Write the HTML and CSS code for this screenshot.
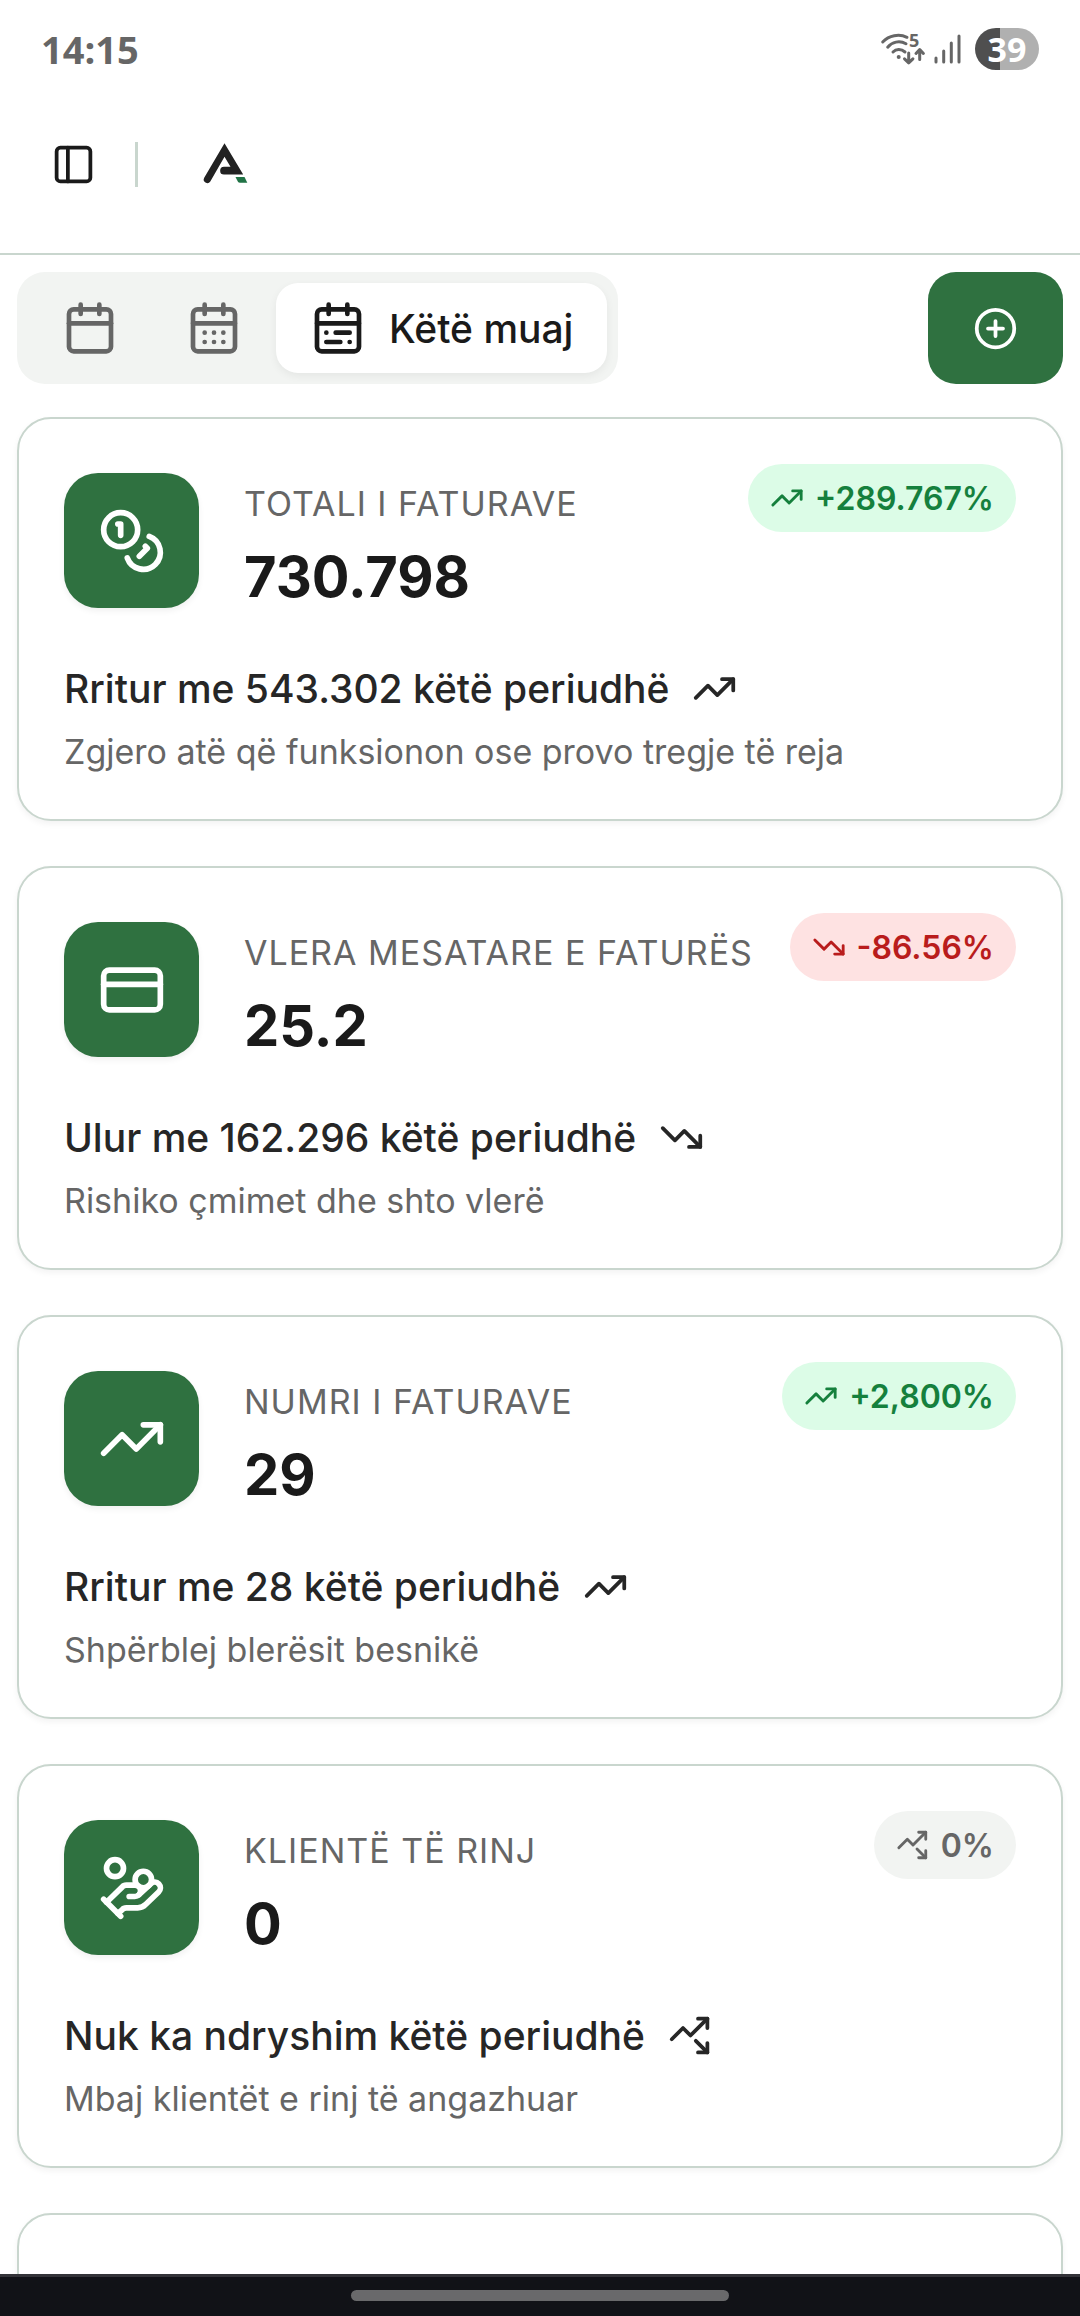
FILE: index.html
```html
<!DOCTYPE html>
<html lang="sq">
<head>
<meta charset="utf-8">
<meta name="viewport" content="width=device-width, initial-scale=1">
<title>Paneli</title>
<link rel="stylesheet" href="styles.css">
</head>
<body>
<svg class="sprite" aria-hidden="true">
  <symbol id="trend-up" viewBox="0 0 24 24"><path d="M16 7h6v6"/><path d="m22 7-8.5 8.5-5-5L2 17"/></symbol>
  <symbol id="trend-down" viewBox="0 0 24 24"><path d="M16 17h6v-6"/><path d="m22 17-8.5-8.5-5 5L2 7"/></symbol>
  <symbol id="trend-flat" viewBox="0 0 24 24"><path d="M14.828 14.828 21 21"/><path d="M21 16v5h-5"/><path d="m21 3-9 9-4-4-6 6"/><path d="M21 8V3h-5"/></symbol>
</svg>
<div class="app">
  <div class="status">
    <span class="clock">14:15</span>
    <div class="signals">
      <svg class="wifi" viewBox="0 -8 46 50" aria-hidden="true">
        <path d="M2.7 10C9 3.500 19 1.500 27 5.300M7.700 15.200C12 10 19.500 8 26 11.800M13 20C16 17 21 16.500 25 20"/>
        <path d="M28.700 21v9.500M24.500 26.800l4.200 4 4.200-4M39.700 27.500v-9M36 21.500l3.700-4 3.700 4"/>
        <circle cx="18.700" cy="25" r="2"/>
        <text x="29" y="15">5</text>
      </svg>
      <svg class="bars" viewBox="0 0 27 32" aria-hidden="true"><path d="M2 25v4M9.700 18v11M17.300 10v19M25 3v26"/></svg>
      <span class="battery">39</span>
    </div>
  </div>

  <header class="topbar">
    <button class="icon-button" type="button" aria-label="Menyja">
      <svg class="icon icon-md" viewBox="0 0 24 24"><rect x="3" y="3" width="18" height="18" rx="2"/><path d="M9 3v18"/></svg>
    </button>
    <span class="divider"></span>
    <a class="logo" href="#" aria-label="Kreu">
      <svg viewBox="0 2 50 45">
        <path fill="#222" d="M24.500 3.300 43.200 34.500H24a3.850 3.850 0 0 1 0-7.700h6.500L24.500 16.700 10.300 41.600A3.600 3.600 0 0 1 4.200 37.800Z"/>
        <path fill="#217346" d="M35.500 37h9l2.800 5.700h-7.300q-1.500 0-2.200-1.200Z"/>
      </svg>
    </a>
  </header>

  <main class="content">
    <div class="toolbar">
      <div class="tabs" role="tablist">
        <button class="tab" type="button" role="tab" aria-selected="false" aria-label="Sot">
          <svg class="icon icon-lg" viewBox="0 0 24 24"><path d="M8 2v4M16 2v4"/><rect x="3" y="4" width="18" height="18" rx="2"/><path d="M3 10h18"/></svg>
        </button>
        <button class="tab" type="button" role="tab" aria-selected="false" aria-label="Këtë javë">
          <svg class="icon icon-lg" viewBox="0 0 24 24"><path d="M8 2v4M16 2v4"/><rect x="3" y="4" width="18" height="18" rx="2"/><path d="M3 10h18M8 14h.01M12 14h.01M16 14h.01M8 18h.01M12 18h.01M16 18h.01"/></svg>
        </button>
        <button class="tab tab-active" type="button" role="tab" aria-selected="true">
          <svg class="icon icon-lg" viewBox="0 0 24 24"><path d="M8 2v4M16 2v4"/><rect x="3" y="4" width="18" height="18" rx="2"/><path d="M3 10h18M17 14h-6M13 18H7M7 14h.01M17 18h.01"/></svg>
          Këtë muaj
        </button>
      </div>
      <button class="add" type="button" aria-label="Shto">
        <svg class="icon icon-md" viewBox="0 0 24 24"><circle cx="12" cy="12" r="10"/><path d="M8 12h8M12 8v8"/></svg>
      </button>
    </div>

    <section class="cards">
      <article class="card">
        <div class="card-head">
          <span class="tile"><svg class="icon icon-xl" viewBox="0 0 24 24"><circle cx="8" cy="8" r="6"/><path d="M18.090 10.370A6 6 0 1 1 10.340 18M7 6h1v4M16.710 13.880l.7.710-2.820 2.820"/></svg></span>
          <div class="figure"><h2 class="label">Totali i faturave</h2><p class="value">730.798</p></div>
          <span class="badge badge-up"><svg class="icon icon-sm"><use href="#trend-up"/></svg>+289.767%</span>
        </div>
        <p class="summary">Rritur me 543.302 këtë periudhë <svg class="icon icon-md"><use href="#trend-up"/></svg></p>
        <p class="hint">Zgjero atë që funksionon ose provo tregje të reja</p>
      </article>

      <article class="card">
        <div class="card-head">
          <span class="tile"><svg class="icon icon-xl" viewBox="0 0 24 24"><rect x="2" y="5" width="20" height="14" rx="2"/><path d="M2 10h20"/></svg></span>
          <div class="figure"><h2 class="label">Vlera mesatare e faturës</h2><p class="value">25.2</p></div>
          <span class="badge badge-down"><svg class="icon icon-sm"><use href="#trend-down"/></svg>-86.56%</span>
        </div>
        <p class="summary">Ulur me 162.296 këtë periudhë <svg class="icon icon-md"><use href="#trend-down"/></svg></p>
        <p class="hint">Rishiko çmimet dhe shto vlerë</p>
      </article>

      <article class="card">
        <div class="card-head">
          <span class="tile"><svg class="icon icon-xl"><use href="#trend-up"/></svg></span>
          <div class="figure"><h2 class="label">Numri i faturave</h2><p class="value">29</p></div>
          <span class="badge badge-up"><svg class="icon icon-sm"><use href="#trend-up"/></svg>+2,800%</span>
        </div>
        <p class="summary">Rritur me 28 këtë periudhë <svg class="icon icon-md"><use href="#trend-up"/></svg></p>
        <p class="hint">Shpërblej blerësit besnikë</p>
      </article>

      <article class="card">
        <div class="card-head">
          <span class="tile"><svg class="icon icon-xl" viewBox="0 0 24 24"><path d="M11 15h2a2 2 0 1 0 0-4h-3c-.6 0-1.100.2-1.400.6L3 17"/><path d="m7 21 1.600-1.400c.3-.4.8-.6 1.400-.6h4c1.100 0 2.100-.4 2.800-1.200l4.600-4.400a2 2 0 0 0-2.750-2.910l-4.200 3.900"/><path d="m2 16 6 6"/><circle cx="16" cy="9" r="2.900"/><circle cx="6" cy="5" r="3"/></svg></span>
          <div class="figure"><h2 class="label">Klientë të rinj</h2><p class="value">0</p></div>
          <span class="badge badge-flat"><svg class="icon icon-sm"><use href="#trend-flat"/></svg>0%</span>
        </div>
        <p class="summary">Nuk ka ndryshim këtë periudhë <svg class="icon icon-md"><use href="#trend-flat"/></svg></p>
        <p class="hint">Mbaj klientët e rinj të angazhuar</p>
      </article>

      <article class="card card-empty"></article>
    </section>
  </main>

  <footer class="navbar"><span class="handle"></span></footer>
</div>
</body>
</html>
```
FILE: styles.css
```css
* {
  box-sizing: border-box;
}

body {
  margin: 0;
  background: #fff;
  color: #1a1a1a;
  font-family: Inter, "Liberation Sans", sans-serif;
}

h2,
p {
  margin: 0;
}

button {
  border: 0;
  padding: 0;
  background: none;
  color: inherit;
  font: inherit;
}

.sprite {
  display: none;
}

.app {
  display: flex;
  flex-direction: column;
  height: 100vh;
}

.icon {
  flex: none;
  display: block;
  fill: none;
  stroke: currentColor;
  stroke-width: 2;
  stroke-linecap: round;
  stroke-linejoin: round;
}

.icon-sm { width: 34px; height: 34px; }
.icon-md { width: 45px; height: 45px; }
.icon-lg { width: 56px; height: 56px; }
.icon-xl { width: 68px; height: 68px; }

/* Status bar */
.status {
  flex: none;
  display: flex;
  align-items: center;
  justify-content: space-between;
  height: 98px;
  padding: 0 41px;
  color: #666;
}

.clock {
  font-family: "Open Sans", sans-serif;
  font-size: 38px;
  font-weight: 700;
  line-height: 42px;
}

.signals {
  display: flex;
  align-items: center;
  gap: 8px;
}

.wifi,
.bars {
  fill: none;
  stroke: #666;
  stroke-width: 3;
  stroke-linecap: round;
  stroke-linejoin: round;
}

.wifi { width: 46px; height: 50px; }
.bars { width: 27px; height: 32px; }

.wifi circle,
.wifi text {
  fill: #666;
  stroke: none;
}

.wifi text {
  font: 700 18px "Open Sans", sans-serif;
}

.battery {
  width: 64px;
  margin-left: 6px;
  border-radius: 21px;
  background: linear-gradient(90deg, #4f4f4f 39%, #b0b0b0 39%);
  color: #fff;
  font: 700 34px/42px "Open Sans", sans-serif;
  text-align: center;
}

/* Top bar */
.topbar {
  flex: none;
  display: flex;
  align-items: center;
  padding: 44px 51px 66px;
  border-bottom: 2px solid #c9d6ce;
}

.divider {
  width: 3px;
  height: 45px;
  margin: 0 62px 0 39px;
  background: #c9d6ce;
}

.logo svg {
  display: block;
  width: 50px;
  height: 45px;
}

/* Content */
.content {
  flex: 1;
  min-height: 0;
  padding: 17px 17px 0;
  overflow-y: auto;
  scrollbar-width: none;
}

.toolbar {
  display: flex;
  justify-content: space-between;
  margin-bottom: 33px;
}

.tabs {
  display: flex;
  padding: 11px;
  border-radius: 28px;
  background: #f2f4f2;
}

.tab {
  display: flex;
  align-items: center;
  gap: 23px;
  height: 90px;
  padding: 0 34px;
  border-radius: 22px;
  color: #666;
  font-size: 39px;
  font-weight: 500;
}

.tab-active {
  background: #fff;
  box-shadow: 0 3px 8px rgba(0, 0, 0, 0.06);
  color: #1a1a1a;
}

.add {
  display: flex;
  align-items: center;
  justify-content: center;
  width: 135px;
  height: 112px;
  border-radius: 28px;
  background: #2f7140;
  color: #fff;
}

.cards {
  display: grid;
  gap: 45px;
}

.card {
  padding: 45px;
  border: 2px solid #c9d6ce;
  border-radius: 34px;
  background: #fff;
  box-shadow: 0 3px 6px rgba(0, 0, 0, 0.05);
}

.card-empty {
  height: 404px;
}

.card-head {
  display: flex;
  align-items: flex-start;
  margin-bottom: 58px;
}

.tile {
  flex: none;
  display: grid;
  place-items: center;
  width: 135px;
  height: 135px;
  margin: 9px 45px 0 0;
  border-radius: 34px;
  background: #2f7140;
  box-shadow: 0 3px 6px rgba(0, 0, 0, 0.06);
  color: #fff;
}

.figure {
  flex: 1;
  min-width: 0;
  padding-top: 17px;
  white-space: nowrap;
}

.label {
  margin-bottom: 23px;
  color: #666;
  font-size: 34px;
  font-weight: 400;
  line-height: 45px;
  letter-spacing: 1px;
  text-transform: uppercase;
}

.value {
  font-size: 56px;
  font-weight: 700;
  line-height: 56px;
}

.badge {
  display: flex;
  align-items: center;
  gap: 11px;
  height: 68px;
  padding: 0 22px;
  border-radius: 34px;
  font-size: 32px;
  font-weight: 600;
}

.badge-up { background: #dcfce7; color: #15803d; }
.badge-down { background: #fee2e2; color: #b91c1c; }
.badge-flat { background: #f2f4f2; color: #666; }

.summary {
  display: flex;
  align-items: center;
  gap: 23px;
  margin-bottom: 18px;
  color: #262626;
  font-size: 39px;
  font-weight: 500;
  line-height: 45px;
}

.hint {
  color: #666;
  font-size: 34px;
  line-height: 45px;
}

/* System navigation */
.navbar {
  flex: none;
  display: flex;
  justify-content: center;
  height: 42px;
  padding-top: 13px;
  border-top: 3px solid #333338;
  background: #111217;
}

.handle {
  width: 35%;
  height: 11px;
  border-radius: 6px;
  background: #69696b;
}
```
